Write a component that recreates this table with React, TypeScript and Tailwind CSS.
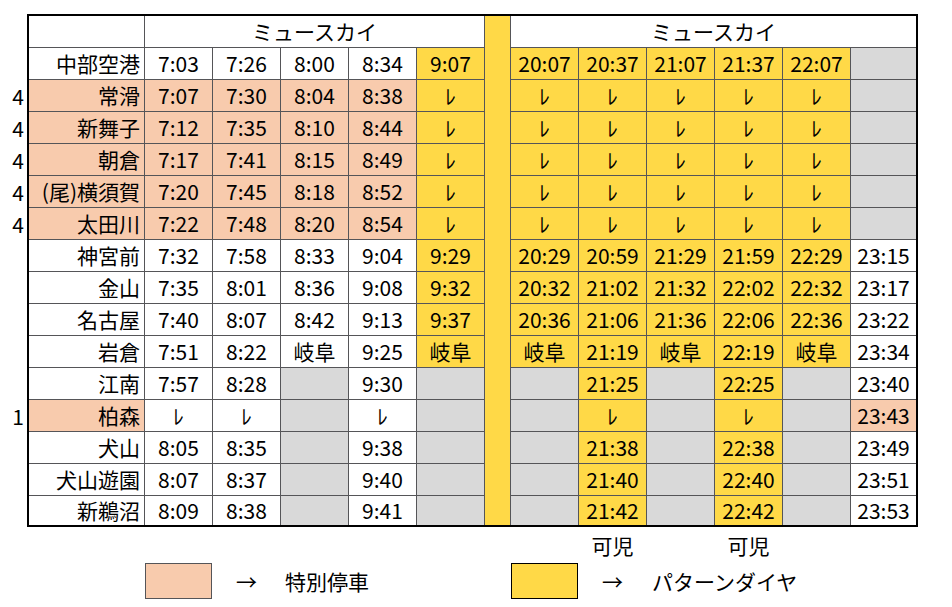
import React from "react";

type Bg = "w" | "p" | "y" | "g";
type Cell = [string, Bg];

const BG: Record<Bg, string> = {
  w: "bg-white",
  p: "bg-[#f8cbad]",
  y: "bg-[#ffd947]",
  g: "bg-[#d9d9d9]",
};

const COLS =
  "grid-cols-[115px_67px_67px_67px_67px_67px_25px_67px_67px_67px_67px_67px_65px]";

const R = "ﾚ";

interface Row {
  name: string;
  nameBg: Bg;
  mark?: string;
  cells: Cell[];
}

// helper: list of times with a single background
const same = (bg: Bg, ...vals: string[]): Cell[] => vals.map((v) => [v, bg] as Cell);

const ROWS: Row[] = [
  {
    name: "中部空港",
    nameBg: "w",
    cells: [
      ...same("w", "7:03", "7:26", "8:00", "8:34"),
      ["9:07", "y"],
      ...same("y", "20:07", "20:37", "21:07", "21:37", "22:07"),
      ["", "g"],
    ],
  },
  ...[
    ["常滑", "7:07", "7:30", "8:04", "8:38"],
    ["新舞子", "7:12", "7:35", "8:10", "8:44"],
    ["朝倉", "7:17", "7:41", "8:15", "8:49"],
    ["(尾)横須賀", "7:20", "7:45", "8:18", "8:52"],
    ["太田川", "7:22", "7:48", "8:20", "8:54"],
  ].map(([name, ...t]) => ({
    name,
    nameBg: "p" as Bg,
    mark: "4",
    cells: [
      ...same("p", ...t),
      [R, "y"] as Cell,
      ...same("y", R, R, R, R, R),
      ["", "g"] as Cell,
    ],
  })),
  ...[
    ["神宮前", "7:32", "7:58", "8:33", "9:04", "9:29", "20:29", "20:59", "21:29", "21:59", "22:29", "23:15"],
    ["金山", "7:35", "8:01", "8:36", "9:08", "9:32", "20:32", "21:02", "21:32", "22:02", "22:32", "23:17"],
    ["名古屋", "7:40", "8:07", "8:42", "9:13", "9:37", "20:36", "21:06", "21:36", "22:06", "22:36", "23:22"],
    ["岩倉", "7:51", "8:22", "岐阜", "9:25", "岐阜", "岐阜", "21:19", "岐阜", "22:19", "岐阜", "23:34"],
  ].map(([name, a, b, c, d, e, f, g, h, i, j, k]) => ({
    name,
    nameBg: "w" as Bg,
    cells: [
      ...same("w", a, b, c, d),
      [e, "y"] as Cell,
      ...same("y", f, g, h, i, j),
      [k, "w"] as Cell,
    ],
  })),
  ...[
    ["江南", "7:57", "8:28", "9:30", "21:25", "22:25", "23:40"],
    ["柏森", R, R, R, R, R, "23:43"],
    ["犬山", "8:05", "8:35", "9:38", "21:38", "22:38", "23:49"],
    ["犬山遊園", "8:07", "8:37", "9:40", "21:40", "22:40", "23:51"],
    ["新鵜沼", "8:09", "8:38", "9:41", "21:42", "22:42", "23:53"],
  ].map(([name, a, b, d, x, y, last]) => {
    const stop = name === "柏森";
    return {
      name,
      nameBg: (stop ? "p" : "w") as Bg,
      mark: stop ? "1" : undefined,
      cells: [
        [a, "w"],
        [b, "w"],
        ["", "g"],
        [d, "w"],
        ["", "g"],
        ["", "g"],
        [x, "y"],
        ["", "g"],
        [y, "y"],
        ["", "g"],
        [last, stop ? "p" : "w"],
      ] as Cell[],
    };
  }),
];

export default function App() {
  return (
    <div className="min-h-screen bg-white pt-[14px] text-[21px] leading-none text-black font-['Noto_Sans_CJK_JP','Noto_Sans',sans-serif]">
      <div className="flex">
        {/* station number marks outside the table */}
        <div className="w-[27px] pt-[34px] flex flex-col">
          {ROWS.map((r, i) => (
            <div key={i} className="h-8 flex items-center justify-end pr-[3px]">
              {r.mark ?? ""}
            </div>
          ))}
        </div>

        <div className="flex flex-col">
          {/* timetable */}
          <div
            className={`grid ${COLS} grid-rows-[31px_repeat(14,31px)_29px] gap-px bg-[#555558] border-2 border-black`}
          >
            <div className="bg-white" />
            <div className="col-span-5 bg-white flex items-center justify-center">
              ミュースカイ
            </div>
            <div className="col-start-7 row-start-1 row-span-16 bg-[#ffd947]" />
            <div className="col-span-6 bg-white flex items-center justify-center">
              ミュースカイ
            </div>

            {ROWS.map((r, i) => (
              <React.Fragment key={i}>
                <div className={`${BG[r.nameBg]} flex items-center justify-end pr-[4px]`}>
                  {r.name}
                </div>
                {r.cells.map(([v, bg], j) => (
                  <div key={j} className={`${BG[bg]} flex items-center justify-center`}>
                    {v}
                  </div>
                ))}
              </React.Fragment>
            ))}
          </div>

          {/* destination notes */}
          <div className={`grid ${COLS} gap-x-px px-[2px] h-[36px] items-center`}>
            <div className="col-start-9 text-center">可児</div>
            <div className="col-start-11 text-center">可児</div>
          </div>

          {/* legend */}
          <div className={`grid ${COLS} gap-x-px px-[2px] h-[36px] items-center`}>
            <div className="col-start-2 h-[36px] bg-[#f8cbad] border border-[#555558]" />
            <div className="col-start-3 text-center">→</div>
            <div className="col-start-4 col-span-3 pl-[4px]">特別停車</div>
            <div className="col-start-8 h-[36px] bg-[#ffd947] border border-black" />
            <div className="col-start-9 text-center">→</div>
            <div className="col-start-10 col-span-4 pl-[5px]">パターンダイヤ</div>
          </div>
        </div>
      </div>
    </div>
  );
}
